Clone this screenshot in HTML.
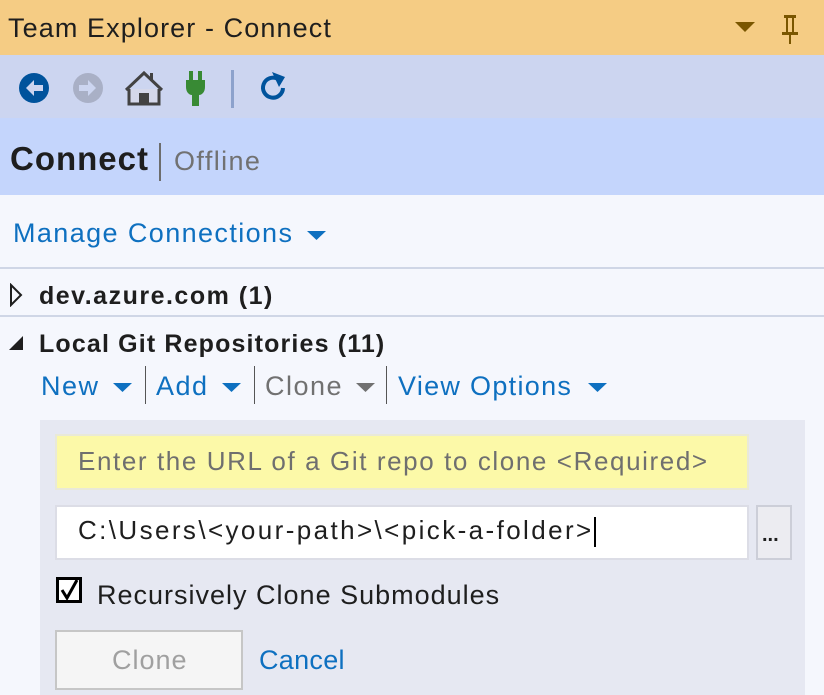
<!DOCTYPE html>
<html><head><style>
body{margin:0;width:824px;height:695px;overflow:hidden;background:#f5f7fd;font-family:"Liberation Sans",sans-serif;position:relative}
.a{position:absolute;white-space:nowrap}
.link{color:#0e70c0}
</style></head><body>
<div class="a" style="left:0;top:0;width:824px;height:55px;background:#f5cc84"></div>
<div class="a" style="left:8px;top:13px;font-size:27px;color:#1e1e1e;letter-spacing:1.1px">Team Explorer - Connect</div>
<svg class="a" style="left:735px;top:20px" width="24" height="14"><path d="M0 2h20l-10 10z" fill="#7a5600"/></svg>
<svg class="a" style="left:778px;top:12px" width="26" height="32"><path d="M6 3h12v3h-2v14h4v3H4v-3h4V6H6z M10 6v14h4V6z M11 23h2v9h-2z" fill="#7a5600"/></svg>
<div class="a" style="left:0;top:55px;width:824px;height:63px;background:#ccd5f0"></div>
<svg class="a" style="left:18px;top:70px" width="280" height="38">
<circle cx="16" cy="18" r="15" fill="#00539c"/><path d="M8 18l8-8v5h9v6h-9v5z" fill="#ccd5f0"/>
<circle cx="70" cy="18" r="15" fill="#a9b0c6"/><path d="M78 18l-8-8v5h-9v6h9v5z" fill="#ccd5f0"/>
<path d="M108 20l18-17 18 17" stroke="#424242" stroke-width="3" fill="none"/><path d="M111 19v15h30V19" stroke="#424242" stroke-width="3" fill="#d5d8ea"/><rect x="121" y="23" width="10" height="11" fill="#424242"/><rect x="132" y="3" width="3" height="8" fill="#424242"/>
<path d="M171 1h4v9h5V1h4v9h3v7c0 5-3 8-6 8v11h-7V25c-3 0-6-3-6-8v-7h3z" fill="#388a34"/>
<rect x="213" y="-5" width="3" height="44" fill="#8da2cc"/>
<path d="M265 18a10 10 0 1 1-5-9" stroke="#00539c" stroke-width="4" fill="none"/><path d="M254 2l13 5-6 10z" fill="#00539c"/>
</svg>
<div class="a" style="left:0;top:118px;width:824px;height:77px;background:#c4d5fc"></div>
<div class="a" style="left:10px;top:140px;font-size:33px;font-weight:bold;color:#1e1e1e;letter-spacing:1px">Connect</div>
<div class="a" style="left:159px;top:143px;width:2px;height:38px;background:#6d6d6d"></div>
<div class="a" style="left:174px;top:146px;font-size:27px;color:#717171;letter-spacing:1.4px">Offline</div>
<div class="a link" style="left:13px;top:218px;font-size:27px;letter-spacing:1.4px">Manage Connections</div>
<svg class="a" style="left:307px;top:231px" width="20" height="10"><path d="M0 0h19l-9.5 9z" fill="#0e70c0"/></svg>
<div class="a" style="left:0;top:267px;width:824px;height:2px;background:#cfd6e6"></div>
<svg class="a" style="left:8px;top:283px" width="16" height="24"><path d="M3 2l10 10-10 10z" fill="none" stroke="#1e1e1e" stroke-width="2"/></svg>
<div class="a" style="left:39px;top:282px;font-size:25px;font-weight:bold;color:#1e1e1e;letter-spacing:1.5px">dev.azure.com (1)</div>
<div class="a" style="left:0;top:315px;width:824px;height:2px;background:#cfd6e6"></div>
<svg class="a" style="left:6px;top:334px" width="22" height="18"><path d="M17 2v14H3z" fill="#1e1e1e"/></svg>
<div class="a" style="left:39px;top:330px;font-size:25px;font-weight:bold;color:#1e1e1e;letter-spacing:1.15px">Local Git Repositories (11)</div>
<div class="a link" style="left:41px;top:371px;font-size:27px;letter-spacing:1.5px">New</div>
<svg class="a" style="left:113px;top:383px" width="20" height="10"><path d="M0 0h19l-9.5 9z" fill="#0e70c0"/></svg>
<div class="a" style="left:145px;top:366px;width:1px;height:38px;background:#555"></div>
<div class="a link" style="left:156px;top:371px;font-size:27px;letter-spacing:1.5px">Add</div>
<svg class="a" style="left:222px;top:383px" width="20" height="10"><path d="M0 0h19l-9.5 9z" fill="#0e70c0"/></svg>
<div class="a" style="left:254px;top:366px;width:1px;height:38px;background:#555"></div>
<div class="a" style="left:265px;top:371px;font-size:27px;color:#717171;letter-spacing:1.5px">Clone</div>
<svg class="a" style="left:356px;top:383px" width="20" height="10"><path d="M0 0h19l-9.5 9z" fill="#717171"/></svg>
<div class="a" style="left:386px;top:366px;width:1px;height:38px;background:#555"></div>
<div class="a link" style="left:398px;top:371px;font-size:27px;letter-spacing:1.3px">View Options</div>
<svg class="a" style="left:588px;top:383px" width="20" height="10"><path d="M0 0h19l-9.5 9z" fill="#0e70c0"/></svg>
<div class="a" style="left:40px;top:420px;width:765px;height:275px;background:#e6e8f2"></div>
<div class="a" style="left:55px;top:434px;width:690px;height:52px;background:#fcf9a8;border:2px solid #e9e9d8"></div>
<div class="a" style="left:78px;top:446px;font-size:26px;color:#6f6f6f;letter-spacing:1.6px">Enter the URL of a Git repo to clone &lt;Required&gt;</div>
<div class="a" style="left:55px;top:505px;width:690px;height:51px;background:#fff;border:2px solid #dcdde6"></div>
<div class="a" style="left:78px;top:515px;font-size:26px;color:#1e1e1e;letter-spacing:2.4px">C:\Users\&lt;your-path&gt;\&lt;pick-a-folder&gt;<span style="display:inline-block;width:2px;height:30px;background:#000;vertical-align:middle"></span></div>
<div class="a" style="left:756px;top:505px;width:32px;height:51px;background:#ececf1;border:2px solid #ccced8"></div>
<div class="a" style="left:762px;top:524px;font-size:20px;font-weight:bold;color:#1e1e1e">...</div>
<div class="a" style="left:56px;top:577px;width:26px;height:26px;border:3px solid #000;background:#fff;box-sizing:border-box"></div>
<svg class="a" style="left:58px;top:577px" width="24" height="26"><path d="M4 13l5 8 10-18" fill="none" stroke="#000" stroke-width="3"/></svg>
<div class="a" style="left:97px;top:580px;font-size:27px;color:#1e1e1e;letter-spacing:1px">Recursively Clone Submodules</div>
<div class="a" style="left:55px;top:630px;width:184px;height:56px;background:#f5f5f5;border:2px solid #c6c6c6"></div>
<div class="a" style="left:112px;top:645px;font-size:27px;color:#a0a0a0;letter-spacing:1px">Clone</div>
<div class="a link" style="left:259px;top:645px;font-size:27px;letter-spacing:0.3px">Cancel</div>
</body></html>
